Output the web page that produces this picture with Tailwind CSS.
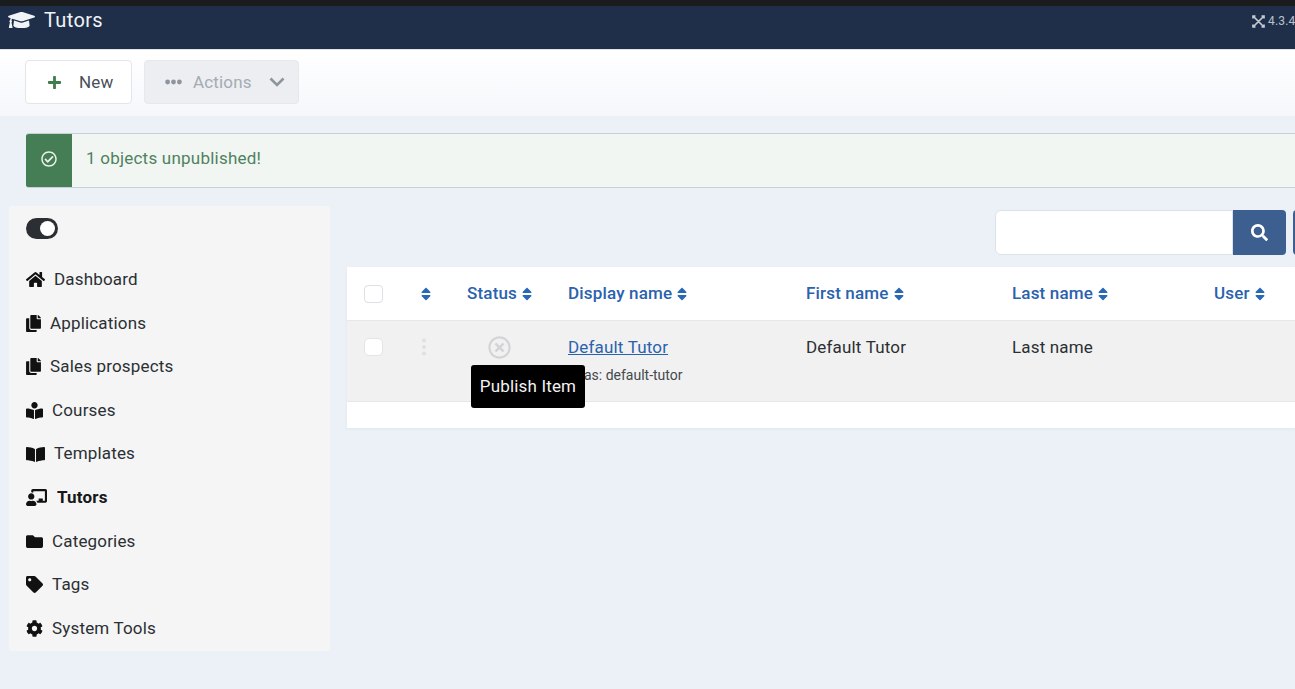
<!DOCTYPE html>
<html lang="en">
<head>
<meta charset="utf-8">
<title>Tutors</title>
<script src="https://cdn.jsdelivr.net/npm/@tailwindcss/browser@4"></script>
</head>
<body class="h-[689px] w-[1295px] overflow-hidden bg-[#ecf1f7] font-['Roboto',sans-serif] text-[#2b2f33] tracking-[0.17px]">
<div class="h-[6px] bg-[#1b1c1d]"></div>
<header class="flex h-[43px] items-start justify-between bg-[#1f2f4a] pl-[8px] text-white">
  <div class="flex items-center gap-[9px] pt-[2px]">
    <svg class="w-[27px] h-[22px] fill-[#f1f4f7]" viewBox="0 0 640 512"><path d="M622.34 153.2L343.4 67.5c-15.2-4.67-31.6-4.67-46.79 0L17.66 153.2c-23.54 7.23-23.54 38.36 0 45.59l48.63 14.94c-10.67 13.19-17.23 29.28-17.88 46.9C38.78 266.15 32 276.11 32 288c0 10.78 5.68 19.85 13.86 25.65L20.33 428.53C18.11 438.52 25.71 448 35.94 448h56.11c10.24 0 17.84-9.48 15.62-19.47L82.14 313.65C90.32 307.85 96 298.78 96 288c0-11.57-6.47-21.25-15.66-26.87.76-15.02 8.44-28.3 20.69-36.72L296.6 284.5c9.06 2.78 26.44 6.25 46.79 0l278.95-85.7c23.55-7.24 23.55-38.36 0-45.6zM352.79 315.09c-28.53 8.76-52.84 3.92-65.59 0l-145.02-44.55L128 384c0 35.35 85.96 64 192 64s192-28.65 192-64l-14.18-113.47-145.03 44.56z"/></svg>
    <span class="text-[20px] leading-[24px] tracking-[0.35px] text-[#f1f4f7]">Tutors</span>
  </div>
  <div class="flex items-center gap-[3px] pt-[8px] text-[12px] leading-[14px] text-[#b9c1cb] whitespace-nowrap w-[43px] overflow-hidden shrink-0">
    <svg class="w-[13px] h-[13px] shrink-0" viewBox="0 0 13 13" fill="none" stroke="#c3cad3" stroke-width="1.700"><path d="M1.500 1.500l10 10M11.500 1.500l-10 10M1 3.500V1h2.500M9.500 1H12v2.500M1 9.500V12h2.500M9.500 12H12V9.500"/></svg>
    <span>4.3.4</span>
  </div>
</header>
<div class="h-[67px] border-t border-[#dfe4ea] bg-gradient-to-b from-white to-[#f5f7fb] pt-[10px] pl-[25px] flex items-start gap-[12px]">
  <button class="flex h-[44px] w-[107px] items-center rounded-[4px] border border-[#e2e5e9] bg-white pl-[21px] pt-[2px] text-[17px] text-[#4a5058]">
    <svg class="w-[15px] h-[15px] fill-[#3f7d4f] mr-[17px] -mt-[2px]" viewBox="0 0 448 512"><path d="M416 208H272V64c0-17.67-14.33-32-32-32h-32c-17.67 0-32 14.33-32 32v144H32c-17.67 0-32 14.33-32 32v32c0 17.67 14.33 32 32 32h144v144c0 17.67 14.33 32 32 32h32c17.67 0 32-14.33 32-32V304h144c17.67 0 32-14.33 32-32v-32c0-17.67-14.33-32-32-32z"/></svg>
    New
  </button>
  <button class="flex h-[44px] w-[155px] items-center rounded-[4px] border border-[#e6e8ec] bg-[#eceef1] pl-[20px] pt-[2px] text-[17px] text-[#a5abb3]">
    <svg class="w-[17px] h-[6px] fill-[#8f959d] mr-[11px] -mt-[2px]" viewBox="0 0 17 6"><circle cx="2.600" cy="3" r="2.400"/><circle cx="8.500" cy="3" r="2.400"/><circle cx="14.400" cy="3" r="2.400"/></svg>
    Actions
    <svg class="w-[16px] h-[10px] ml-[17px] -mt-[2px] fill-none stroke-[#8f959d] stroke-[2.600]" viewBox="0 0 16 10"><path d="M1.500 1.500L8 8l6.500-6.500"/></svg>
  </button>
</div>
<div class="mt-[17px] ml-[26px] flex h-[55px] w-[1280px] overflow-hidden rounded-[3px] border-y border-[#c8d0d2] bg-[#f1f6f2]">
  <div class="flex w-[46px] shrink-0 items-center justify-center bg-[#457d54] pb-[3px]">
    <svg class="w-[16px] h-[16px] fill-[#eaf1ec]" viewBox="0 0 512 512"><path d="M256 8C119.033 8 8 119.033 8 256s111.033 248 248 248 248-111.033 248-248S392.967 8 256 8zm0 48c110.532 0 200 89.451 200 200 0 110.532-89.451 200-200 200-110.532 0-200-89.451-200-200 0-110.532 89.451-200 200-200m140.204 130.267l-22.536-22.718c-4.667-4.705-12.265-4.736-16.970-.068L215.346 303.697l-59.792-60.277c-4.667-4.705-12.265-4.736-16.970-.069l-22.719 22.536c-4.705 4.667-4.736 12.265-.068 16.971l90.781 91.516c4.667 4.705 12.265 4.736 16.970.068l172.589-171.204c4.704-4.668 4.734-12.266.067-16.971z"/></svg>
  </div>
  <div class="flex items-center pl-[14px] pb-[4px] text-[17px] tracking-[0.23px] text-[#4f8160]">1 objects unpublished!</div>
</div>
<div class="mt-[18px] flex items-start">
  <aside class="ml-[9px] h-[445px] w-[321px] shrink-0 rounded-[2px] bg-[#f5f5f5] pl-[17px] pt-[12px] text-[17px]">
    <div class="relative mb-[19px] h-[21px] w-[32px] rounded-full bg-[#2b2f33]">
      <div class="absolute right-[3px] top-[3px] h-[15px] w-[15px] rounded-full bg-white"></div>
    </div>
    <nav class="flex flex-col">
      <a class="flex h-[43.6px] items-center gap-[9px]"><svg class="w-[19px] h-[17px] fill-[#111]" viewBox="0 0 576 512"><path d="M280.37 148.26L96 300.11V464a16 16 0 0 0 16 16l112.06-.29a16 16 0 0 0 15.92-16V368a16 16 0 0 1 16-16h64a16 16 0 0 1 16 16v95.64a16 16 0 0 0 16 16.05L464 480a16 16 0 0 0 16-16V300L295.67 148.26a12.19 12.19 0 0 0-15.3 0zM571.6 251.47L488 182.56V44.05a12 12 0 0 0-12-12h-56a12 12 0 0 0-12 12v72.61L318.47 43a48 48 0 0 0-61 0L4.34 251.47a12 12 0 0 0-1.6 16.9l25.5 31A12 12 0 0 0 45.15 301l235.22-193.74a12.19 12.19 0 0 1 15.3 0L530.9 301a12 12 0 0 0 16.9-1.6l25.5-31a12 12 0 0 0-1.7-16.93z"/></svg>Dashboard</a>
      <a class="flex h-[43.6px] items-center gap-[9px]"><svg class="w-[15px] h-[17px] fill-[#111]" viewBox="0 0 448 512"><path d="M320 448v40c0 13.255-10.745 24-24 24H24c-13.255 0-24-10.745-24-24V120c0-13.255 10.745-24 24-24h72v296c0 30.879 25.121 56 56 56h168zm0-344V0H152c-13.255 0-24 10.745-24 24v368c0 13.255 10.745 24 24 24h272c13.255 0 24-10.745 24-24V128H344c-13.2 0-24-10.8-24-24zm120.971-31.029L375.029 7.029A24 24 0 0 0 358.059 0H352v96h96v-6.059a24 24 0 0 0-7.029-16.97z"/></svg>Applications</a>
      <a class="flex h-[43.6px] items-center gap-[9px]"><svg class="w-[15px] h-[17px] fill-[#111]" viewBox="0 0 448 512"><path d="M320 448v40c0 13.255-10.745 24-24 24H24c-13.255 0-24-10.745-24-24V120c0-13.255 10.745-24 24-24h72v296c0 30.879 25.121 56 56 56h168zm0-344V0H152c-13.255 0-24 10.745-24 24v368c0 13.255 10.745 24 24 24h272c13.255 0 24-10.745 24-24V128H344c-13.2 0-24-10.8-24-24zm120.971-31.029L375.029 7.029A24 24 0 0 0 358.059 0H352v96h96v-6.059a24 24 0 0 0-7.029-16.97z"/></svg>Sales prospects</a>
      <a class="flex h-[43.6px] items-center gap-[9px]"><svg class="w-[17px] h-[17px] fill-[#111]" viewBox="0 0 512 512"><path d="M352 96c0-53.02-42.98-96-96-96s-96 42.98-96 96 42.98 96 96 96 96-42.98 96-96zM233.59 241.1c-59.33-36.32-155.43-46.3-203.79-49.05C13.55 191.13 0 203.51 0 219.14v222.8c0 14.33 11.59 26.28 26.49 27.05 43.66 2.29 131.99 10.68 193.04 41.43 9.37 4.72 20.48-1.71 20.48-12.26V252.56c-.01-4.67-2.32-8.95-6.42-11.46zm248.61-49.05c-48.35 2.74-144.46 12.73-203.78 49.05-4.1 2.51-6.41 6.96-6.41 11.63v245.79c0 10.59 11.14 17.01 20.54 12.28 61.04-30.72 149.32-39.11 192.97-41.4 14.9-.78 26.49-12.73 26.49-27.06V219.14c-.01-15.63-13.56-28.01-29.81-27.09z"/></svg>Courses</a>
      <a class="flex h-[43.6px] items-center gap-[9px]"><svg class="w-[19px] h-[17px] fill-[#111]" viewBox="0 0 576 512"><path d="M542.22 32.05c-54.8 3.11-163.72 14.43-230.96 55.59-4.64 2.84-7.27 7.89-7.27 13.17v363.87c0 11.55 12.63 18.85 23.28 13.49 69.18-34.82 169.23-44.32 218.7-46.92 16.89-.89 30.02-14.43 30.02-30.66V62.75c.01-17.71-15.35-31.74-33.77-30.7zM264.73 87.64C197.5 46.48 88.58 35.17 33.78 32.05 15.36 31.01 0 45.04 0 62.75V400.6c0 16.24 13.13 29.78 30.02 30.66 49.49 2.6 149.59 12.11 218.77 46.95 10.62 5.35 23.21-1.94 23.21-13.46V100.63c0-5.29-2.62-10.14-7.27-12.99z"/></svg>Templates</a>
      <a class="flex h-[43.6px] items-center gap-[10px] font-bold text-[#16181a]"><svg class="w-[21px] h-[17px] fill-[#111]" viewBox="0 0 640 512"><path d="M208 352c-2.39 0-4.78.35-7.06 1.09C187.98 357.3 174.35 360 160 360c-14.35 0-27.98-2.7-40.95-6.91-2.28-.74-4.66-1.09-7.05-1.09C49.94 352-.33 402.48 0 464.62.14 490.88 21.73 512 48 512h224c26.27 0 47.86-21.12 48-47.38.33-62.14-49.94-112.62-112-112.62zm-48-32c53.02 0 96-42.98 96-96s-42.98-96-96-96-96 42.98-96 96 42.98 96 96 96zM592 0H208c-26.47 0-48 22.25-48 49.59V96c23.42 0 45.1 6.78 64 17.8V64h352v288h-64v-64H384v64h-76.24c19.1 16.69 33.12 38.73 39.69 64H592c26.47 0 48-22.25 48-49.59V49.59C640 22.25 618.47 0 592 0z"/></svg>Tutors</a>
      <a class="flex h-[43.6px] items-center gap-[9px]"><svg class="w-[17px] h-[17px] fill-[#111]" viewBox="0 0 512 512"><path d="M464 128H272l-64-64H48C21.49 64 0 85.49 0 112v288c0 26.51 21.49 48 48 48h416c26.51 0 48-21.49 48-48V176c0-26.51-21.49-48-48-48z"/></svg>Categories</a>
      <a class="flex h-[43.6px] items-center gap-[9px]"><svg class="w-[17px] h-[17px] fill-[#111]" viewBox="0 0 512 512"><path d="M0 252.118V48C0 21.49 21.49 0 48 0h204.118a48 48 0 0 1 33.941 14.059l211.882 211.882c18.745 18.745 18.745 49.137 0 67.882L293.823 497.941c-18.745 18.745-49.137 18.745-67.882 0L14.059 286.059A48 48 0 0 1 0 252.118zM112 64c-26.51 0-48 21.49-48 48s21.49 48 48 48 48-21.49 48-48-21.49-48-48-48z"/></svg>Tags</a>
      <a class="flex h-[43.6px] items-center gap-[9px]"><svg class="w-[17px] h-[17px] fill-[#111]" viewBox="0 0 512 512"><path d="M487.4 315.7l-42.6-24.6c4.3-23.2 4.3-47 0-70.2l42.6-24.6c4.9-2.8 7.1-8.6 5.5-14-11.1-35.6-30-67.8-54.7-94.6-3.8-4.1-10-5.1-14.8-2.3L380.8 110c-17.9-15.4-38.5-27.3-60.8-35.1V25.8c0-5.6-3.9-10.5-9.4-11.7-36.7-8.2-74.3-7.8-109.2 0-5.5 1.2-9.4 6.1-9.4 11.7V75c-22.2 7.9-42.8 19.8-60.8 35.1L88.7 85.5c-4.9-2.8-11-1.9-14.8 2.3-24.7 26.7-43.6 58.9-54.7 94.6-1.7 5.4.6 11.2 5.5 14L67.3 221c-4.3 23.2-4.3 47 0 70.2l-42.6 24.6c-4.9 2.8-7.1 8.6-5.5 14 11.1 35.6 30 67.8 54.7 94.6 3.8 4.1 10 5.1 14.8 2.3l42.6-24.6c17.9 15.4 38.5 27.3 60.8 35.1v49.2c0 5.6 3.9 10.5 9.4 11.7 36.7 8.2 74.3 7.8 109.2 0 5.5-1.2 9.4-6.1 9.4-11.7v-49.2c22.2-7.9 42.8-19.8 60.8-35.1l42.6 24.6c4.9 2.8 11 1.9 14.8-2.3 24.7-26.7 43.6-58.9 54.7-94.6 1.5-5.5-.7-11.3-5.6-14.1zM256 336c-44.1 0-80-35.9-80-80s35.9-80 80-80 80 35.9 80 80-35.9 80-80 80z"/></svg>System Tools</a>
    </nav>
  </aside>
  <main class="ml-[17px] w-[948px] shrink-0 pt-[4px]">
    <div class="flex h-[45px] pl-[648px]">
      <div class="h-[45px] w-[238px] shrink-0 rounded-l-[6px] border border-[#dde2ea] bg-white"></div>
      <div class="flex h-[45px] w-[53px] shrink-0 items-center justify-center rounded-r-[4px] bg-[#3d5f8f]">
        <svg class="w-[17px] h-[17px] fill-white" viewBox="0 0 512 512"><path d="M505 442.7L405.3 343c-4.5-4.5-10.6-7-17-7H372c27.6-35.3 44-79.7 44-128C416 93.1 322.9 0 208 0S0 93.1 0 208s93.1 208 208 208c48.3 0 92.7-16.4 128-44v16.3c0 6.4 2.5 12.5 7 17l99.7 99.7c9.4 9.4 24.6 9.4 33.9 0l28.3-28.3c9.4-9.4 9.4-24.6.1-34zM208 336c-70.7 0-128-57.2-128-128 0-70.7 57.2-128 128-128 70.7 0 128 57.2 128 128 0 70.7-57.2 128-128 128z"/></svg>
      </div>
      <div class="ml-[7px] h-[45px] w-[20px] shrink-0 rounded-l-[4px] bg-[#3d5f8f]"></div>
    </div>
    <section class="relative mt-[12px] h-[161px] bg-white shadow-[0_1px_3px_rgba(30,47,74,0.05)]">
      <div class="grid h-[54px] grid-cols-[74px_46px_101px_238px_206px_202px_81px] items-center border-b border-[#e6e8eb] text-[17px] font-medium text-[#2a62ad]">
        <div class="pl-[17px]"><div class="h-[18px] w-[19px] rounded-[4px] border border-[#dcdfe3] bg-white"></div></div>
        <div><svg class="w-[10px] h-[16px] fill-[#2a68b5]" viewBox="0 0 320 512"><path d="M41 288h238c21.4 0 32.1 25.9 17 41L177 448c-9.4 9.4-24.6 9.4-33.9 0L24 329c-15.1-15.1-4.4-41 17-41zm255-105L177 64c-9.4-9.4-24.6-9.4-33.9 0L24 183c-15.1 15.1-4.4 41 17 41h238c21.4 0 32.1-25.9 17-41z"/></svg></div>
        <div class="flex items-center gap-[5px]">Status<svg class="w-[10px] h-[16px] fill-[#2a68b5]" viewBox="0 0 320 512"><path d="M41 288h238c21.4 0 32.1 25.9 17 41L177 448c-9.4 9.4-24.6 9.4-33.9 0L24 329c-15.1-15.1-4.4-41 17-41zm255-105L177 64c-9.4-9.4-24.6-9.4-33.9 0L24 183c-15.1 15.1-4.4 41 17 41h238c21.4 0 32.1-25.9 17-41z"/></svg></div>
        <div class="flex items-center gap-[5px]">Display name<svg class="w-[10px] h-[16px] fill-[#2a68b5]" viewBox="0 0 320 512"><path d="M41 288h238c21.4 0 32.1 25.9 17 41L177 448c-9.4 9.4-24.6 9.4-33.9 0L24 329c-15.1-15.1-4.4-41 17-41zm255-105L177 64c-9.4-9.4-24.6-9.4-33.9 0L24 183c-15.1 15.1-4.4 41 17 41h238c21.4 0 32.1-25.9 17-41z"/></svg></div>
        <div class="flex items-center gap-[5px]">First name<svg class="w-[10px] h-[16px] fill-[#2a68b5]" viewBox="0 0 320 512"><path d="M41 288h238c21.4 0 32.1 25.9 17 41L177 448c-9.4 9.4-24.6 9.4-33.9 0L24 329c-15.1-15.1-4.4-41 17-41zm255-105L177 64c-9.4-9.4-24.6-9.4-33.9 0L24 183c-15.1 15.1-4.4 41 17 41h238c21.4 0 32.1-25.9 17-41z"/></svg></div>
        <div class="flex items-center gap-[5px]">Last name<svg class="w-[10px] h-[16px] fill-[#2a68b5]" viewBox="0 0 320 512"><path d="M41 288h238c21.4 0 32.1 25.9 17 41L177 448c-9.4 9.4-24.6 9.4-33.9 0L24 329c-15.1-15.1-4.4-41 17-41zm255-105L177 64c-9.4-9.4-24.6-9.4-33.9 0L24 183c-15.1 15.1-4.4 41 17 41h238c21.4 0 32.1-25.9 17-41z"/></svg></div>
        <div class="flex items-center gap-[5px]">User<svg class="w-[10px] h-[16px] fill-[#2a68b5]" viewBox="0 0 320 512"><path d="M41 288h238c21.4 0 32.1 25.9 17 41L177 448c-9.4 9.4-24.6 9.4-33.9 0L24 329c-15.1-15.1-4.4-41 17-41zm255-105L177 64c-9.4-9.4-24.6-9.4-33.9 0L24 183c-15.1 15.1-4.4 41 17 41h238c21.4 0 32.1-25.9 17-41z"/></svg></div>
      </div>
      <div class="grid h-[81px] grid-cols-[74px_46px_101px_238px_206px_202px_81px] items-start border-b border-[#e6e8eb] bg-[#f1f1f1] pt-[15px] text-[17px]">
        <div class="pl-[17px] pt-[2px]"><div class="h-[18px] w-[19px] rounded-[5px] border border-[#e2e4e7] bg-white"></div></div>
        <div class="pt-[2px]"><svg class="h-[18px] w-[6px] fill-[#dfe0e1]" viewBox="0 0 6 18"><circle cx="3" cy="2.500" r="2"/><circle cx="3" cy="9" r="2"/><circle cx="3" cy="15.500" r="2"/></svg></div>
        <div class="pl-[21px]"><svg class="h-[23px] w-[23px] fill-[#d3d4d6]" viewBox="0 0 512 512"><path d="M256 8C119 8 8 119 8 256s111 248 248 248 248-111 248-248S393 8 256 8zm0 448c-110.500 0-200-89.500-200-200S145.500 56 256 56s200 89.500 200 200-89.500 200-200 200zm101.800-262.200L295.600 256l62.200 62.200c4.700 4.700 4.700 12.300 0 17l-22.600 22.600c-4.700 4.700-12.300 4.700-17 0L256 295.600l-62.200 62.200c-4.700 4.700-12.300 4.700-17 0l-22.600-22.600c-4.700-4.700-4.700-12.300 0-17l62.200-62.200-62.200-62.200c-4.700-4.700-4.700-12.300 0-17l22.600-22.600c4.700-4.700 12.300-4.700 17 0l62.200 62.200 62.200-62.200c4.700-4.700 12.300-4.700 17 0l22.600 22.600c4.700 4.700 4.700 12.300 0 17z"/></svg></div>
        <div>
          <a class="text-[#2a62ad] underline leading-[22px] block">Default Tutor</a>
          <div class="mt-[9px] text-[14px] leading-[16px] tracking-normal text-[#44484c]">Alias: default-tutor</div>
        </div>
        <div class="leading-[22px]">Default Tutor</div>
        <div class="leading-[22px]">Last name</div>
        <div></div>
      </div>
      <div class="absolute left-[124px] top-[98px] flex h-[43px] w-[114px] items-center justify-center rounded-[3px] bg-black text-[17px] text-[#f2f2f2]">Publish Item</div>
    </section>
  </main>
</div>
</body>
</html>
